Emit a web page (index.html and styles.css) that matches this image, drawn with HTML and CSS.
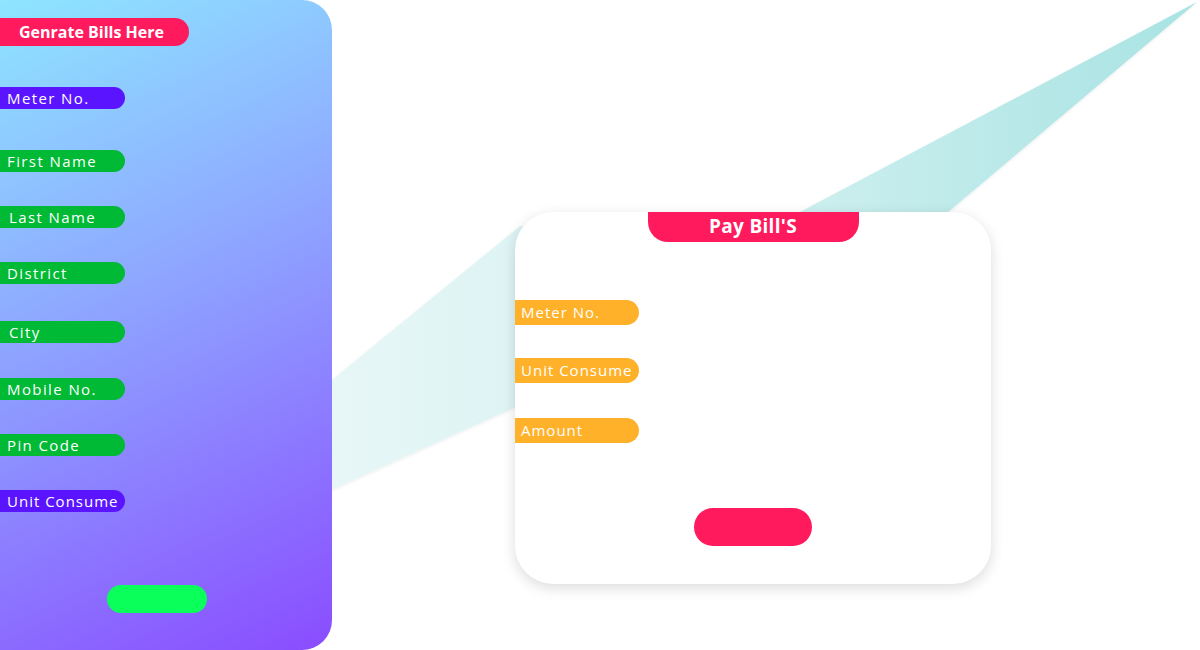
FILE: index.html
```html
<!DOCTYPE html>
<html lang="en">
<head>
<meta charset="utf-8">
<title>Bills</title>
<link rel="stylesheet" href="styles.css">
</head>
<body>
<div class="page">
  <svg class="streak" width="1200" height="650" viewBox="0 0 1200 650" aria-hidden="true">
    <defs>
      <linearGradient id="tg" x1="300" y1="0" x2="1200" y2="0" gradientUnits="userSpaceOnUse">
        <stop offset="0" stop-color="#e9f7f7"/>
        <stop offset="0.5" stop-color="#d2f0f0"/>
        <stop offset="1" stop-color="#a8e3e3"/>
      </linearGradient>
      <filter id="sh" x="-5%" y="-5%" width="110%" height="110%">
        <feDropShadow dx="0" dy="1" stdDeviation="1.5" flood-color="#000" flood-opacity="0.08"/>
      </filter>
    </defs>
    <polygon fill="url(#tg)" filter="url(#sh)" points="1197,2 700,265 520,226 300,406 300,504 600,369 800,337"/>
  </svg>

  <aside class="gen-panel">
    <div class="gen-title">Genrate Bills Here</div>
    <div class="gen-fields">
      <div class="tag tag-purple row-meter">Meter No.</div>
      <div class="tag tag-green">First Name</div>
      <div class="tag tag-green indent">Last Name</div>
      <div class="tag tag-green row-district">District</div>
      <div class="tag tag-green indent row-city">City</div>
      <div class="tag tag-green">Mobile No.</div>
      <div class="tag tag-green">Pin Code</div>
      <div class="tag tag-purple tight">Unit Consume</div>
    </div>
    <div class="gen-action"><button class="btn-green" type="button"></button></div>
  </aside>

  <main class="pay-area">
    <section class="pay-card">
      <div class="pay-head">Pay Bill'S</div>
      <div class="pay-fields">
        <div class="tag tag-orange">Meter No.</div>
        <div class="tag tag-orange">Unit Consume</div>
        <div class="tag tag-orange">Amount</div>
      </div>
      <div class="pay-action"><button class="btn-pink" type="button"></button></div>
    </section>
  </main>
</div>
</body>
</html>
```
FILE: styles.css
```css
html, body {
  margin: 0;
  padding: 0;
  background: #ffffff;
}

body {
  font-family: "Segoe UI", "Open Sans", "Noto Sans", sans-serif;
  overflow: hidden;
}

.page {
  position: relative;
  display: flex;
  width: 1200px;
  height: 650px;
}

.streak {
  position: absolute;
  left: 0;
  top: 0;
  z-index: 0;
}

.gen-panel {
  position: relative;
  z-index: 1;
  width: 332px;
  height: 650px;
  box-sizing: border-box;
  padding-top: 18px;
  border-radius: 0 30px 30px 0;
  background: linear-gradient(155deg, #8ee6ff 0%, #8ea8ff 42%, #8a4cff 100%);
  display: flex;
  flex-direction: column;
}

.gen-title {
  width: 189px;
  height: 28px;
  box-sizing: border-box;
  padding-left: 19px;
  background: #ff1a5e;
  border-radius: 0 14px 14px 0;
  color: #ffffff;
  font-weight: 700;
  font-size: 16px;
  line-height: 28px;
  letter-spacing: 0;
}

.gen-fields {
  margin-top: 41px;
  display: flex;
  flex-direction: column;
  gap: 34px;
}

.tag {
  width: 125px;
  height: 22px;
  box-sizing: border-box;
  padding-left: 7px;
  border-radius: 0 11px 11px 0;
  color: #ffffff;
  font-size: 15px;
  line-height: 22px;
  letter-spacing: 1.4px;
  white-space: nowrap;
}

.tag.indent { padding-left: 9px; }
.tag.tight { letter-spacing: 1px; }
.row-meter { margin-bottom: 7px; }
.row-district { margin-bottom: 3px; }
.row-city { margin-bottom: 1px; }

.tag-purple { background: #5b14ff; }
.tag-green { background: #00b934; }
.tag-orange {
  width: 124px;
  height: 25px;
  padding-left: 6px;
  line-height: 25px;
  letter-spacing: 1px;
  border-radius: 0 12.5px 12.5px 0;
  background: #ffb129;
}

.gen-action {
  margin-top: 73px;
  padding-left: 107px;
}

.btn-green {
  display: block;
  width: 100px;
  height: 28px;
  border: 0;
  padding: 0;
  border-radius: 14px;
  background: #0aff5a;
}

.pay-area {
  position: relative;
  z-index: 1;
  flex: 1;
  padding-left: 183px;
  padding-top: 212px;
}

.pay-card {
  width: 476px;
  height: 372px;
  background: #ffffff;
  border-radius: 38px;
  box-shadow: 0 4px 14px rgba(0, 0, 0, 0.14);
  display: flex;
  flex-direction: column;
  align-items: center;
}

.pay-head {
  width: 211px;
  height: 30px;
  background: #ff1a5e;
  border-radius: 0 0 20px 20px;
  color: #ffffff;
  font-weight: 700;
  font-size: 19px;
  line-height: 28px;
  text-align: center;
  letter-spacing: 0.3px;
}

.pay-fields {
  align-self: stretch;
  margin-top: 58px;
  display: flex;
  flex-direction: column;
  gap: 33px;
}

.pay-fields .tag-orange:nth-child(3) { margin-top: 2px; }

.pay-action {
  margin-top: 65px;
}

.btn-pink {
  display: block;
  width: 118px;
  height: 38px;
  border: 0;
  padding: 0;
  border-radius: 19px;
  background: #ff1a5e;
}
```
